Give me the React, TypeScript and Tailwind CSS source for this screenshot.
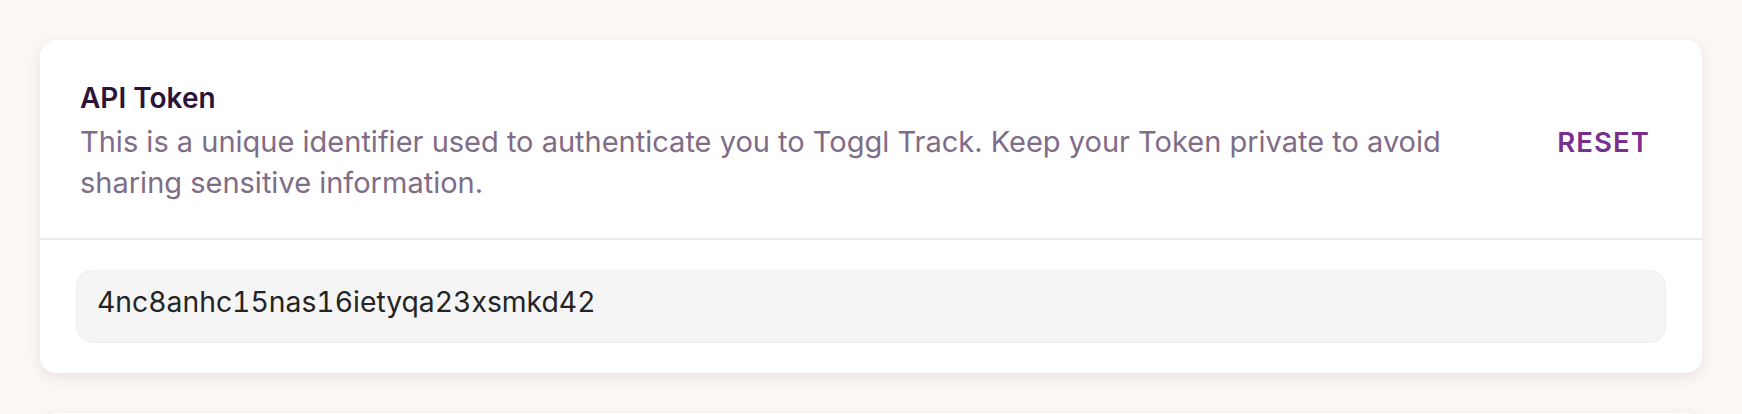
const token = "4nc8anhc15nas16ietyqa23xsmkd42";

export default function App() {
  return (
    <div className="min-h-screen bg-[#fcf8f6] p-10 font-['Inter','Liberation_Sans',sans-serif]">
      <section className="rounded-2xl bg-white shadow-[0_4px_14px_0_rgba(90,50,50,0.12)]">
        <div className="flex items-center justify-between border-b-2 border-[#efe9ec] px-10 pt-[41px] pb-[35px]">
          <div className="w-[1380px]">
            <h2 className="text-[28px] leading-[34px] font-semibold text-[#2c1338]">API Token</h2>
            <p className="mt-[6px] text-[29px] leading-[41px] text-[#7f6c88]">
              This is a unique identifier used to authenticate you to Toggl Track. Keep your Token private to avoid
              sharing sensitive information.
            </p>
          </div>
          <button className="px-3 text-[27.5px] leading-[34px] font-semibold tracking-[0.04em] text-[#7a2f8e]">
            RESET
          </button>
        </div>
        <div className="px-9 py-[30px]">
          <div className="rounded-2xl border border-[#efefef] bg-[#f5f5f5] px-5 pt-[13px] pb-[22px] text-[28.3px] leading-[36px] tabular-nums text-[#242424]">
            {token}
          </div>
        </div>
      </section>
      <section className="mt-10 h-24 rounded-2xl bg-white shadow-[0_4px_14px_0_rgba(90,50,50,0.12)]" />
    </div>
  );
}
